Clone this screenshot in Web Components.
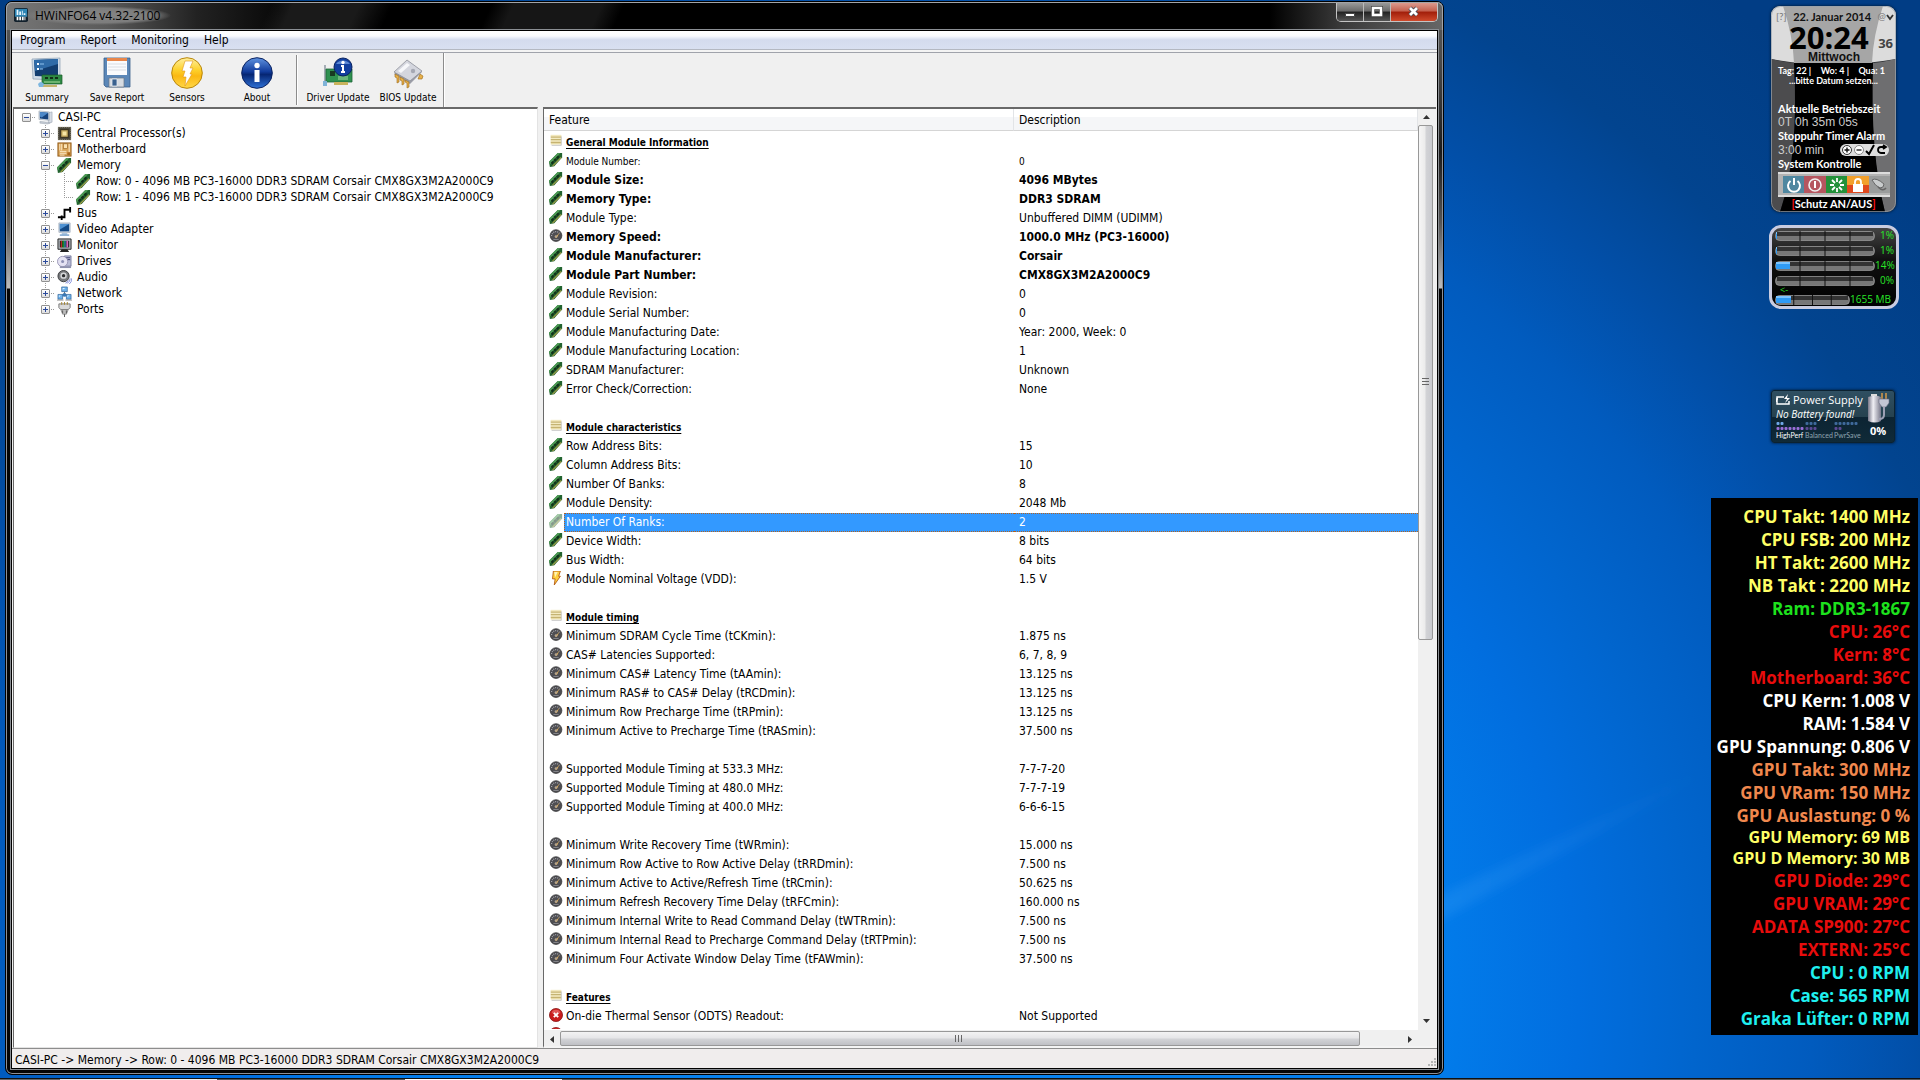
<!DOCTYPE html>
<html lang="de">
<head>
<meta charset="utf-8">
<title>HWiNFO64 v4.32-2100</title>
<style>
html,body{margin:0;height:100%}
body{font:12px/16px "DejaVu Sans Condensed","DejaVu Sans",sans-serif;color:#000;overflow:hidden}
</style>
</head>
<body>
<desk-top>
  <hw-window caption="HWiNFO64 v4.32-2100">
    <hw-menu slot="menu"></hw-menu>
    <hw-toolbar slot="tools"></hw-toolbar>
    <hw-tree slot="tree"></hw-tree>
    <hw-list slot="list"></hw-list>
    <span slot="status">CASI-PC -&gt; Memory -&gt; Row: 0 - 4096 MB PC3-16000 DDR3 SDRAM Corsair CMX8GX3M2A2000C9</span>
  </hw-window>
  <clock-gadget slot="gadgets"></clock-gadget>
  <meter-gadget slot="gadgets"></meter-gadget>
  <power-gadget slot="gadgets"></power-gadget>
  <sensor-gadget slot="gadgets"></sensor-gadget>
</desk-top>
<script>
const define = (name, render) => customElements.define(name, class extends HTMLElement {
  connectedCallback() {
    if (this.shadowRoot) return;
    this.attachShadow({ mode: 'open' }).innerHTML = render(this);
  }
});
const RESET = ':host{box-sizing:border-box}button{font:inherit;color:inherit;background:none;border:0;padding:0;margin:0;display:block;text-align:center}*{box-sizing:border-box}svg{display:block}';

const ICONS = {
  app: `<rect width="16" height="16" rx="2" fill="#12202c"/><rect x="1" y="1" width="14" height="9" fill="#2f86b5"/><path d="M3 2h2v6H3zM6 4h2v4H6zM9 3h1v5H9zM11 6h2v2h-2z" fill="#e8f6ff"/><path d="M3 10h2v4H3zM6 10h2v4H6zM9 10h2v4H9zM12 10h1v4h-1z" fill="#fff"/>`,
  pc: `<path d="M11 3l4-1v11l-4 1z" fill="#d5dbe4" stroke="#8c96a3" stroke-width=".5"/><path d="M1 1l11 1v9L1 10z" fill="#e3e9f0" stroke="#7f8b99" stroke-width=".5"/><path d="M2 2l9 1v7L2 9z" fill="#15427c"/><path d="M2 2l9 1-7 5-2-1z" fill="#4c88c8"/><path d="M2 12l8 1 3 1-3 1-8-1z" fill="#c3cad3" stroke="#8c96a3" stroke-width=".4"/>`,
  cpu: `<rect x="1" y="1" width="14" height="14" fill="#4a473c"/><rect x="1.500" y="1.500" width="13" height="13" fill="none" stroke="#8a8672" stroke-dasharray="1 1"/><rect x="4" y="4" width="8" height="8" fill="#c9ad62" stroke="#2b2515"/><rect x="6" y="6" width="4" height="4" fill="#f7e6a5"/>`,
  board: `<rect x="1" y="1" width="14" height="14" fill="#d9a55a" stroke="#8f5714"/><rect x="7" y="2" width="4" height="5" fill="#fbe2b0" stroke="#8f5714" stroke-width=".6"/><path d="M3 2v7M5 2v7M13 2v9M3 10h7M3 12h7M3 14h5" stroke="#fff3d8" stroke-width=".9"/><rect x="11" y="11" width="3" height="3" fill="#a8641a"/>`,
  ram: `<path d="M0 10L10 0h5v5L6 15l-5 1z" fill="#22632f"/><path d="M0 10L10 0h3L1 13z" fill="#4d9a55"/><path d="M2 11l2-2 2 1-2 3zM5 8l2-2 2 1-2 3zM8 5l2-2 2 1-2 3z" fill="#12301a"/><path d="M4 15L14 5" stroke="#a8a04a" stroke-width="1.200"/>`,
  bus: `<path d="M1 12h7V4h6M5 10v5M14 1v6" fill="none" stroke="#000" stroke-width="2"/>`,
  video: `<path d="M2 1h12v10H2z" fill="#dfe6ee" stroke="#8090a2" stroke-width=".6"/><path d="M3 2h10v8H3z" fill="#134a86"/><path d="M3 2h10L3 8z" fill="#4f92d2"/><path d="M5 12h6v1h2v2H3v-2h2z" fill="#8fb3d6"/>`,
  monitor: `<path d="M1 1h14v11H1z" fill="#aeb4ba" stroke="#222"/><path d="M3 3h10v7H3z" fill="#111"/><path d="M4 3h1v7H4z" fill="#f33"/><path d="M6 3h1v7H6z" fill="#3d3"/><path d="M8 3h1v7H8z" fill="#3cf"/><path d="M10 3h2v7h-2z" fill="#d6b"/><path d="M5 12h6l2 3H3z" fill="#222"/>`,
  drive: `<path d="M8 2h7v11H8z" fill="#b9bcd6" stroke="#5c5f88" stroke-width=".7"/><path d="M9 4h5M9 6h5" stroke="#34386b"/><circle cx="6" cy="8" r="5.500" fill="#e4e2f2" stroke="#8784a8" stroke-width=".8"/><circle cx="6" cy="8" r="1.600" fill="#8c8fb4"/><path d="M3 13h12v2H3z" fill="#8f92ae"/>`,
  audio: `<circle cx="7" cy="6.500" r="6" fill="#77797c" stroke="#3a3b3d"/><circle cx="7" cy="6" r="3.400" fill="#d5d6d8"/><circle cx="7" cy="6" r="1.800" fill="#2d2e30"/><path d="M11 14q3-1 3-5M13 15q3-2 2.500-6M9 14q2 0 3-3" fill="none" stroke="#7a86d8" stroke-width=".9"/>`,
  net: `<path d="M8 6v4M4 11l4-3 4 3" stroke="#6a6a6a" fill="none"/><path d="M5 1h6v5H5zM1 9h5v5H1zM10 9h5v5h-5z" fill="#6eb2ea" stroke="#2a5e96" stroke-width=".7"/><path d="M6 2h3L6 4zM2 10h2l-2 2zM11 10h2l-2 2z" fill="#e2f2ff"/><circle cx="8" cy="9.500" r="2" fill="#3978b5"/><path d="M0 15h7M9 15h7" stroke="#909090"/>`,
  port: `<path d="M2 2h12v4l-2 2H4L2 6z" fill="#d9d9d9" stroke="#777"/><path d="M5 0v3M8 0v3M11 0v3" stroke="#a48531"/><path d="M4 8h8l-2 5H6z" fill="#bdbdbd" stroke="#777" stroke-width=".7"/><path d="M8 13v3M6 9v3M10 9v3" stroke="#555"/>`,
  list: `<rect x="2" y="1" width="12" height="11" fill="#e8dca6"/><path d="M2 3.500h12M2 6.500h12M2 9.500h12" stroke="#b8a45e"/><path d="M2 2h12M2 5h12M2 8h12" stroke="#f8f1cf" stroke-width=".9"/><path d="M3 13h11V3" fill="none" stroke="#c4c4c4"/>`,
  gauge: `<circle cx="8" cy="7.500" r="6.700" fill="#4e4e52" stroke="#2c2c2e" stroke-width=".8"/><path d="M3 8a5 5 0 0 1 9-3" fill="none" stroke="#b8b8c0" stroke-dasharray="1 1.300" stroke-width="1.300"/><path d="M7 10l5-6-3 6z" fill="#f0b95a"/><circle cx="8" cy="8.500" r="1.500" fill="#b6a58c"/><path d="M5 12h6" stroke="#8d8d92"/>`,
  bolt: `<path d="M5 0h8l-2 6h2L6 16l1-7H4z" fill="#ffcf3e" stroke="#b35a12"/><path d="M6 1h4L7 7z" fill="#fff4b8"/>`,
  err: `<circle cx="8" cy="8" r="7.500" fill="#c81d1d" stroke="#7c0c0c" stroke-width=".8"/><path d="M3 6a5 4 0 0 1 10 0z" fill="#ef7d7d" opacity=".6"/><path d="M5.500 5.500l5 5M10.500 5.500l-5 5" stroke="#fff" stroke-width="2.200"/>`,
  summary: `<path d="M1 2l28-1v22L2 22z" fill="#cfdbe8" stroke="#8a9db2" stroke-width=".7"/><path d="M3 3l24-1v18L4 19z" fill="#123d70"/><path d="M3 3l24-1v5L4 14z" fill="#2f6ba8"/><path d="M6 6h2v2H6zM6 11h2v2H6z" fill="#fff"/><path d="M9 7h4M9 12h3" stroke="#8fc3ef"/><path d="M11 18h20v9H11z" fill="#2f8a45" stroke="#1a5c2a" stroke-width=".7"/><path d="M14 20h3v2h-3zM19 20h3v2h-3zM24 20h3v2h-3z" fill="#12301a"/><path d="M13 25h16" stroke="#a9dd9a"/><path d="M12 28h14v2H12z" fill="#c5b36c"/><path d="M7 27q3-4 6 0l-1 3H8z" fill="#7db6df"/>`,
  save: `<path d="M3 1h26v29H5l-2-2z" fill="#5b87b8" stroke="#3b5f8a" stroke-width=".8"/><path d="M6 1h20v17H6z" fill="#fafbfd"/><path d="M6 1h20v3H6z" fill="#e8864a"/><path d="M7 7h18M7 10h18M7 13h18" stroke="#d9dde3"/><path d="M8 21h15v9H8z" fill="#d6dbe1" stroke="#6a7685" stroke-width=".7"/><path d="M11 22h5v7h-5z" fill="#39618f" stroke="#e9eef4" stroke-width=".8"/>`,
  sensors: `<defs><linearGradient id="g" x2="0" y2="1"><stop offset="0" stop-color="#fff0a0"/><stop offset=".4" stop-color="#fdd12c"/><stop offset=".6" stop-color="#fbb812"/><stop offset="1" stop-color="#ffd84a"/></linearGradient></defs><circle cx="16" cy="16" r="15.300" fill="url(#g)" stroke="#b8860b"/><path d="M14 4h8l-3 7h3l-3 6h2l-7 12 1-9h-3l2-6h-3z" fill="#fff" stroke="#e0951b" stroke-width=".6"/>`,
  about: `<defs><linearGradient id="g" x2="0" y2="1"><stop offset="0" stop-color="#5f93e0"/><stop offset=".45" stop-color="#123c9c"/><stop offset=".55" stop-color="#062673"/><stop offset="1" stop-color="#2f72d8"/></linearGradient></defs><circle cx="16" cy="16" r="15.300" fill="url(#g)" stroke="#0b2260"/><circle cx="16" cy="8.500" r="2.700" fill="#fff"/><path d="M13.500 13h5v12h-5z" fill="#fff"/>`,
  driver: `<path d="M3 8v21" stroke="#a5adb5" stroke-width="2"/><path d="M4 12h26v13H4z" fill="#2f9150" stroke="#1d6435" stroke-width=".8"/><path d="M8 14h5v5H8z" fill="#183a22"/><path d="M16 20h10M16 22h10" stroke="#a6dba4"/><path d="M12 25h14v3H12z" fill="#c8b35c"/><path d="M1 24h4v5H1z" fill="#7fb3d8"/><circle cx="21" cy="10" r="9" fill="#123f9f" stroke="#0a2360"/><path d="M14 7a8 7 0 0 1 14 0z" fill="#7ba6ea" opacity=".7"/><circle cx="21" cy="5.500" r="1.700" fill="#fff"/><path d="M19 8h3v6h1v2h-4v-2h1v-4h-1z" fill="#fff"/>`,
  bios: `<path d="M2 17l14-13 14 11-12 12z" fill="#9c9ea8"/><path d="M2 15L15 3l15 11-12 10z" fill="#d4d6de" stroke="#83858f" stroke-width=".7"/><path d="M6 14l9-8 3 2-9 8z" fill="#f6f7fa"/><circle cx="21" cy="14" r="2.200" fill="#a5a8b3"/><path d="M3 17l4 2v6l-2 1v-5l-2-1zM8 20l4 2v5l-2 1v-4l-2-1zM13 23l4 2v5l-2 1v-5l-2-1zM28 17l3 2-1 3-4 0z" fill="#e7b04a" stroke="#9a6a17" stroke-width=".6"/>`
};
customElements.define('hw-icon', class extends HTMLElement {
  connectedCallback() {
    if (this.shadowRoot) return;
    const n = this.getAttribute('name'), big = ['summary','save','sensors','about','driver','bios'].includes(n) ? 32 : 16;
    this.attachShadow({ mode: 'open' }).innerHTML =
      `<style>:host{display:inline-block;width:14px;height:14px;flex:none}svg{display:block;width:100%;height:100%}</style><svg viewBox="0 0 ${big} ${big}" aria-hidden="true">${ICONS[n]}</svg>`;
  }
});

define('desk-top', () => `<style>${RESET}
:host{display:grid;height:100vh;grid-template:minmax(0,1fr) 2px / minmax(0,1fr) 209px;position:relative;overflow:hidden;
 background:radial-gradient(circle 1300px at 47% 93%,#0a86f2 0,#027bea 42%,#016edf 52%,#0165cd 61%,#015bbe 70%,#024fa8 78%,#02448f 87%,#013d85 100%)}
.beam{position:absolute;inset:0;width:100%;height:100%}
.main{display:flex;min-height:0;padding:1px 267px 3px 5px;position:relative}
.side{display:flex;flex-direction:column;align-items:flex-end;position:relative}
.task{grid-column:1/3;position:relative;border-top:1px solid #111;background:linear-gradient(90deg,#666 60px,#eee 60px 217px,#555 217px 405px,#fff 405px 562px,#555 562px)}
</style>
<svg class="beam" viewBox="0 0 1920 1080" preserveAspectRatio="none" aria-hidden="true"><defs><linearGradient id="b"><stop offset="0" stop-color="#5ab4ff" stop-opacity=".18"/><stop offset="1" stop-color="#5ab4ff" stop-opacity="0"/></linearGradient><filter id="s"><feGaussianBlur stdDeviation="5"/></filter></defs>
<path d="M1430 900L1700 770v8L1430 926z" fill="url(#b)" filter="url(#s)"/></svg>
<div class="main"><slot></slot></div><div class="side"><slot name="gadgets"></slot></div><div class="task"></div>`);

define('hw-window', el => `<style>${RESET}
:host{display:flex;flex-direction:column;flex:1;min-width:0;border:1px solid #000;border-radius:7px;padding:0 5px 5px;box-shadow:inset 0 0 0 1px #8d9096;
 background:linear-gradient(#5c5c5c 0,#4a4a4a 60px,#1c1c1c 150px,#555 220px,#bcbcbc 286px,#050505 287px)}
header{display:flex;align-items:flex-start;height:28px;margin:0 -5px;padding:0 4px 0 7px;border-radius:6px 6px 0 0;border:1px solid #a2a4a8;border-bottom:0;
 background:linear-gradient(115deg,transparent 240px,#1a1a1a 260px 320px,transparent 350px 440px,#161616 460px 540px,transparent 560px),linear-gradient(90deg,#777 0,#5a5a5a 100px,#222 190px,#000 300px,#000 88%,#3a3a3a 93%,#666 100%)}
header hw-icon{margin-top:5px}
h1{margin:3px 0 0 -4px;font:12px/19px "Open Sans",sans-serif;padding:0 11px;color:#000;background:radial-gradient(closest-side,#858585,#7d7d7d 75%,transparent)}
.ctl{display:flex;margin-left:auto;border:1px solid #c4c4c4;border-top:0;border-radius:0 0 5px 5px;overflow:hidden}
.ctl button{width:27px;height:18px;display:grid;place-items:center;background:linear-gradient(#999 0,#6a6a6a 45%,#222 50%,#555 100%);border-right:1px solid #bbb}
.ctl .x{width:46px;border:0;background:linear-gradient(#dc9a8d 0,#c4604e 45%,#a11e0a 50%,#cf4a2c 100%)}
.client{flex:1;min-height:0;display:flex;flex-direction:column;background:#f0f0f0;border:1px solid #000;outline:1px solid #8b8f94}
.body{flex:1;min-height:0;display:flex;gap:5px;padding:0 1px}
footer{height:20px;border-top:1px solid #8d8d8d;background:#f0eded;padding:2px 0 0 3px;display:flex;justify-content:space-between;align-items:center}
footer svg{align-self:flex-end}
::slotted([slot=tree]){flex:0 0 525px}
::slotted([slot=list]){flex:1;min-width:0}
</style>
<header><hw-icon name="app"></hw-icon><h1>${el.getAttribute('caption')}</h1>
<div class="ctl"><button aria-label="Minimize"><svg width="14" height="12"><path d="M2.500 7.500h9v3h-9z" fill="#fff" stroke="#444"/></svg></button>
<button aria-label="Maximize"><svg width="14" height="12"><path d="M3 2h8v7H3z" fill="none" stroke="#444" stroke-width="4"/><path d="M3 2h8v7H3z" fill="none" stroke="#fff" stroke-width="2.500"/></svg></button>
<button class="x" aria-label="Close"><svg width="14" height="12"><path d="M3 2l7 7M10 2l-7 7" stroke="#444a55" stroke-width="4.500"/><path d="M3 2l7 7M10 2l-7 7" stroke="#fff" stroke-width="2.800"/></svg></button></div></header>
<div class="client"><slot name="menu"></slot><slot name="tools"></slot><div class="body"><slot name="tree"></slot><slot name="list"></slot></div>
<footer><slot name="status"></slot><svg width="12" height="12"><path d="M9 3h2M9 6h2M9 9h2M6 6h2M6 9h2M3 9h2" stroke="#b5b5b5" stroke-width="2" stroke-dasharray="2"/></svg></footer></div>`);

define('hw-menu', () => `<style>${RESET}
:host{display:flex;gap:15px;height:22px;padding-left:8px;background:linear-gradient(#fff 0,#fafbfe 5px,#e6ebf7 7px,#d4dbee 9px,#d9e0f1 18px,#f0f0f0 18px);border-bottom:1px solid #a0a3ab;box-shadow:inset 0 -2px #f4f4f4,inset 0 -3px #b4b8c2}
button{height:19px;line-height:19px}</style>
${['Program','Report','Monitoring','Help'].map(t => `<button>${t}</button>`).join('')}`);

define('hw-toolbar', () => `<style>${RESET}
:host{display:flex;height:54px;font-size:10px;line-height:12px}
button{width:70px;height:53px;padding-top:4px;display:flex;flex-direction:column;align-items:center;gap:3px;white-space:nowrap}
hw-icon{width:32px;height:32px}
i{width:1px;height:50px;margin:2px 6px 0 4px;background:#8c8c8c;box-shadow:1px 0 #fff}
i.e{height:54px;margin:0}</style>
${[['summary','Summary'],['save','Save Report'],['sensors','Sensors'],['about','About'],0,['driver','Driver Update'],['bios','BIOS Update']].map(b => b ? `<button><hw-icon name="${b[0]}"></hw-icon><span>${b[1]}</span></button>` : '<i></i>').join('')}<i class="e"></i>`);

const TREE = [[0,'-','pc','CASI-PC'],[1,'+','cpu','Central Processor(s)'],[1,'+','board','Motherboard'],[1,'-','ram','Memory'],
 [2,'','ram','Row: 0 - 4096 MB PC3-16000 DDR3 SDRAM Corsair CMX8GX3M2A2000C9'],[2,'end','ram','Row: 1 - 4096 MB PC3-16000 DDR3 SDRAM Corsair CMX8GX3M2A2000C9'],
 [1,'+','bus','Bus'],[1,'+','video','Video Adapter'],[1,'+','monitor','Monitor'],[1,'+','drive','Drives'],[1,'+','audio','Audio'],[1,'+','net','Network'],[1,'+ end','port','Ports']];
define('hw-tree', () => `<style>${RESET}
:host{display:block;background:#fff;border:1px solid #e3e3e3;border-top:2px solid #696969;border-left:1px solid #696969;padding-left:3px}
ul{list-style:none;margin:0;padding:0}
li{display:flex;height:16px;align-items:center;line-height:16px;white-space:nowrap}
li>span{width:19px;height:16px;flex:none;display:grid;place-items:center;--v:repeating-linear-gradient(#999 0 1px,transparent 1px 2px);--h:repeating-linear-gradient(90deg,#999 0 1px,transparent 1px 2px)}
.v{background:var(--v) 9px 0/1px 16px no-repeat}
.t{background:var(--v) 9px 0/1px 16px no-repeat,var(--h) 9px 8px/10px 1px no-repeat}
.l{background:var(--v) 9px 0/1px 8px no-repeat,var(--h) 9px 8px/10px 1px no-repeat}
.r{background:var(--h) 9px 8px/10px 1px no-repeat}
hw-icon{width:15px;height:15px}
b{font-weight:400;padding-left:3px}
button{width:9px;height:9px;border:1px solid #919191;border-radius:1px;background:linear-gradient(#fff,#ddd)}
</style><ul>${TREE.map(([d,e,ic,t]) => {
  let c = '';
  if (d >= 1) c += '<span></span>';
  if (d === 2) c += '<span class="v"></span>';
  const pm = e[0] === '+' || e[0] === '-';
  c += `<span class="${d === 0 ? 'r' : e.includes('end') ? 'l' : 't'}">${pm ? `<button aria-label="${e[0] === '+' ? 'Expand' : 'Collapse'}"><svg width="7" height="7"><path d="M1 3.500h5${e[0] === '+' ? 'M3.500 1v5' : ''}" stroke="#2b4a9b"/></svg></button>` : ''}</span>`;
  return `<li>${c}<span><hw-icon name="${ic}"></hw-icon></span><b>${t}</b></li>`;
}).join('')}</ul>`);

const r = 'ram', g = 'gauge';
const ROWS = [['list','General Module Information','','h'],[r,'Module Number:','0','s'],[r,'Module Size:','4096 MBytes','b'],[r,'Memory Type:','DDR3 SDRAM','b'],
[r,'Module Type:','Unbuffered DIMM (UDIMM)'],[g,'Memory Speed:','1000.0 MHz (PC3-16000)','b'],[r,'Module Manufacturer:','Corsair','b'],[r,'Module Part Number:','CMX8GX3M2A2000C9','b'],
[r,'Module Revision:','0'],[r,'Module Serial Number:','0'],[r,'Module Manufacturing Date:','Year: 2000, Week: 0'],[r,'Module Manufacturing Location:','1'],[r,'SDRAM Manufacturer:','Unknown'],[r,'Error Check/Correction:','None'],0,
['list','Module characteristics','','h'],[r,'Row Address Bits:','15'],[r,'Column Address Bits:','10'],[r,'Number Of Banks:','8'],[r,'Module Density:','2048 Mb'],[r,'Number Of Ranks:','2','sel'],[r,'Device Width:','8 bits'],[r,'Bus Width:','64 bits'],['bolt','Module Nominal Voltage (VDD):','1.5 V'],0,
['list','Module timing','','h'],[g,'Minimum SDRAM Cycle Time (tCKmin):','1.875 ns'],[g,'CAS# Latencies Supported:','6, 7, 8, 9'],[g,'Minimum CAS# Latency Time (tAAmin):','13.125 ns'],[g,'Minimum RAS# to CAS# Delay (tRCDmin):','13.125 ns'],[g,'Minimum Row Precharge Time (tRPmin):','13.125 ns'],[g,'Minimum Active to Precharge Time (tRASmin):','37.500 ns'],0,
[g,'Supported Module Timing at 533.3 MHz:','7-7-7-20'],[g,'Supported Module Timing at 480.0 MHz:','7-7-7-19'],[g,'Supported Module Timing at 400.0 MHz:','6-6-6-15'],0,
[g,'Minimum Write Recovery Time (tWRmin):','15.000 ns'],[g,'Minimum Row Active to Row Active Delay (tRRDmin):','7.500 ns'],[g,'Minimum Active to Active/Refresh Time (tRCmin):','50.625 ns'],[g,'Minimum Refresh Recovery Time Delay (tRFCmin):','160.000 ns'],[g,'Minimum Internal Write to Read Command Delay (tWTRmin):','7.500 ns'],[g,'Minimum Internal Read to Precharge Command Delay (tRTPmin):','7.500 ns'],[g,'Minimum Four Activate Window Delay Time (tFAWmin):','37.500 ns'],0,
['list','Features','','h'],['err','On-die Thermal Sensor (ODTS) Readout:','Not Supported'],['err','Auto Self Refresh (ASR):','Not Supported']];
define('hw-list', () => `<style>${RESET}
:host{display:grid;grid-template:minmax(0,1fr) 17px / minmax(0,1fr) 18px;background:#fff;border-top:2px solid #696969;border-left:1px solid #696969;border-bottom:2px solid #f4f4f4}
.view{overflow:hidden;min-height:0}
table{width:100%;border-collapse:separate;border-spacing:0;table-layout:fixed}
col.f{width:470px}
th{height:22px;padding:0 0 0 5px;text-align:left;font-weight:400;border-bottom:1px solid #d5d5d5;border-right:1px solid #e2e4e7;background:linear-gradient(#fff 8px,#f5f6f8 8px)}
td{height:19px;padding:0;line-height:19px;white-space:nowrap}
td+td,th+th{padding-left:5px}
.c{display:flex;align-items:flex-start;height:19px;padding-left:5px}
.c hw-icon{margin-top:1px}
.c span{padding-left:2px;margin-left:1px;flex:1}
.b td{font-weight:700}
.h td{font-size:10px;font-weight:700}.h u{text-underline-offset:2px}
.s td{font-size:10px}
.sel td{color:#fff}
.sel .c span,.sel td+td{background:#39f;border-top:1px dotted #b5611c;border-bottom:1px dotted #b5611c;line-height:17px}
.sel .c span{border-left:1px dotted #b5611c;padding-left:1px}
.sel hw-icon{opacity:.5}
.gap td{height:2px}
.vs,.hs{display:flex;background:#f0f0f0}
.vs{flex-direction:column;padding-right:2px}
.hs{padding:1px 0;border-top:1px solid #fff}
.corner{background:#f0f0f0}
.bar button{width:16px;height:16px;display:grid;place-items:center;flex:none}
.track{flex:1;display:flex;min-height:0;min-width:0}
.vs .track{flex-direction:column}
.th{display:grid;place-items:center;border:1px solid #989898;border-radius:2px}
.vs .th{height:58%;width:15px;background:linear-gradient(90deg,#f6f6f6,#ececec 45%,#d2d3d6 55%,#c9cacf)}
.hs .th{width:95%;height:15px;background:linear-gradient(#f3f3f3,#e6e6e8 45%,#d2d3d6 55%,#bfc0c5)}
</style>
<div class="view"><table><colgroup><col class="f"><col></colgroup><thead><tr><th>Feature</th><th>Description</th></tr></thead><tbody>
<tr class="gap"><td></td><td></td></tr>
${ROWS.map(x => x ? `<tr class="${x[3] || ''}"><td><div class="c"><hw-icon name="${x[0]}"></hw-icon><span>${x[3] === 'h' ? `<u>${x[1]}</u>` : x[1]}</span></div></td><td>${x[2]}</td></tr>` : '<tr><td></td><td></td></tr>').join('')}
</tbody></table></div>
<div class="bar vs"><button aria-label="Up"><svg width="7" height="4"><path d="M0 4l3.500-4L7 4z" fill="#333"/></svg></button><div class="track"><div class="th"><svg width="7" height="9"><path d="M0 .5h7M0 3.500h7M0 6.500h7" stroke="#666"/></svg></div></div><button aria-label="Down"><svg width="7" height="4"><path d="M0 0l3.500 4L7 0z" fill="#333"/></svg></button></div>
<div class="bar hs"><button aria-label="Left"><svg width="4" height="7"><path d="M4 0L0 3.500 4 7z" fill="#333"/></svg></button><div class="track"><div class="th"><svg width="9" height="7"><path d="M.5 0v7M3.500 0v7M6.500 0v7" stroke="#666"/></svg></div></div><button aria-label="Right"><svg width="4" height="7"><path d="M0 0l4 3.500L0 7z" fill="#333"/></svg></button></div><div class="corner"></div>`);

define('clock-gadget', () => `<style>${RESET}
:host{display:flex;flex-direction:column;position:relative;width:125px;height:206px;margin:6px 24px 0 0;padding:4px 7px 0;border-radius:9px;overflow:hidden;color:#fff;font:700 11px/13px Lato,sans-serif;white-space:nowrap;box-shadow:0 0 3px #012}
:host>*{position:relative}
svg.bg{position:absolute;inset:0}
p{margin:0}
.date{display:flex;justify-content:space-between;height:13px;color:#111;margin:0 -5px 0 -2px;line-height:13px}
.date i{font-style:normal;font-weight:400;font-size:10px;color:#777;display:flex;align-items:center}
.time{display:flex;align-items:flex-end;height:28px;margin:0 -4px 0 11px;justify-content:space-between;color:#000;font:700 31px/28px "Open Sans",sans-serif}
.time small{font:700 13px/15px "Open Sans",sans-serif;color:#444}
.day{font:700 12px/12px "Liberation Sans",sans-serif;color:#111;text-align:center;padding-left:1px}
.sm{font:700 9px/10px Lato,sans-serif;text-align:center}
.sm.a{margin-top:3px;display:flex;justify-content:space-between;padding:0 4px 0 0}
.big{margin-top:16px}
.ar{font:12px/14px "Liberation Sans",sans-serif;color:#ccc}
.l{line-height:14px}
.row{display:flex;justify-content:space-between;align-items:center;height:14px}
.pill{display:flex;background:#ddd;border-radius:6px;padding:0 1px;height:12px}
.strip{display:flex;margin:1px -1px 0 0;height:25px;padding:2px 0 2px 5px;background:#b3b3b3;border-top:2px solid #ddd;border-bottom:2px solid #ddd}
.strip button{flex:1;display:grid;place-items:center}
.prot{text-align:center;line-height:14px}.prot em{color:#f11;font-style:normal}
</style>
<svg class="bg" width="125" height="206" viewBox="0 0 125 206" aria-hidden="true">
<rect width="125" height="206" fill="#2c2e32"/><path d="M0 0h125v53Q62 64 0 53z" fill="#dcdcdc"/><path d="M12 0h100q-10 30-11 57H23Q22 30 12 0z" fill="#a6a6a6"/><path d="M0 53q12 3 23 4 6 90-14 149H0z" fill="#4c4c4e"/><path d="M125 53q-12 3-23 4-4 90 12 149h11z" fill="#6e6e70"/><path d="M23 57h79q-3 90 12 149H9Q28 150 23 57z" fill="#000"/><rect x=".5" y=".5" width="124" height="205" rx="9" fill="none" stroke="#9aa3ad" opacity=".7"/></svg>
<div class="date"><i>[?]</i><span>22. Januar 2014</span><i>@<svg width="8" height="8"><path d="M1 2l3 4 3-4" fill="none" stroke="#333" stroke-width="1.800"/></svg></i></div>
<div class="time"><span>20:24</span><small>36</small></div>
<p class="day">Mittwoch</p>
<p class="sm a"><span>Tag: 22 |</span><span>Wo: 4 |</span><span>Qua: 1</span></p><p class="sm">...bitte Datum setzen...</p>
<p class="big">Aktuelle Betriebszeit</p><p class="ar">0T 0h 35m 05s</p><p class="l">Stoppuhr Timer Alarm</p>
<div class="row ar"><span>3:00 min</span><div class="pill"><button aria-label="Mehr"><svg width="12" height="12"><circle cx="6" cy="6" r="4.500" fill="#fff" stroke="#333"/><path d="M3.500 6h5M6 3.500v5" stroke="#111" stroke-width="1.400"/></svg></button><button aria-label="Weniger"><svg width="12" height="12"><circle cx="6" cy="6" r="4.500" fill="#fff" stroke="#888"/><path d="M3.500 6h5" stroke="#333" stroke-width="1.400"/></svg></button><button aria-label="Start"><svg width="11" height="12"><path d="M1 7l3 3 5-9" fill="none" stroke="#000" stroke-width="2"/></svg></button><button aria-label="Reset"><svg width="12" height="12"><path d="M9 9H5a3 3 0 0 1 0-6h4M7 1l3 2-3 2" fill="none" stroke="#000" stroke-width="1.800"/></svg></button></div></div>
<p class="l">System Kontrolle</p>
<div class="strip">
<button aria-label="Standby" style="background:#4f87a0"><svg width="18" height="18"><path d="M5.500 5a6 6 0 1 0 7 0M9 2v7" fill="none" stroke="#fff" stroke-width="2"/></svg></button>
<button aria-label="Ausschalten" style="background:#b5555f"><svg width="18" height="18"><circle cx="9" cy="9" r="6" fill="none" stroke="#eee" stroke-width="1.600"/><path d="M9 5v7" stroke="#fff" stroke-width="2"/></svg></button>
<button aria-label="Neustart" style="background:#23913a"><svg width="18" height="18"><path d="M9 2v4M9 12v4M2 9h4M12 9h4M4 4l3 3M11 11l3 3M14 4l-3 3M7 11l-3 3" stroke="#fff" stroke-width="1.800"/></svg></button>
<button aria-label="Sperren" style="background:linear-gradient(#f2a02c 50%,#e0481c 50%)"><svg width="18" height="18"><path d="M6 9V6a3 3 0 0 1 6 0v3" fill="none" stroke="#fff" stroke-width="1.800"/><path d="M4 8h10v8H4z" fill="#fff"/></svg></button>
<button aria-label="Abmelden" style="background:#9a9c9c"><svg width="18" height="18"><path d="M2 4q4-3 12 4 0 4-4 4Q5 10 2 4z" fill="#c9cccd" stroke="#666"/><path d="M8 11q5 5 8 1" fill="none" stroke="#666" stroke-width="1.500"/></svg></button></div>
<p class="prot"><em>[</em>Schutz AN/AUS<em>]</em></p>`);

define('meter-gadget', () => `<style>${RESET}
:host{display:flex;flex-direction:column;width:130px;height:84px;margin:13px 21px 0 0;padding:0 2px 0 3px;border:3px solid #c9cce0;border-radius:12px;background:linear-gradient(#444,#111 40%,#000);color:#28e628;font:10px/15px "Open Sans",sans-serif}
div{display:flex;align-items:center;justify-content:space-between;height:15px;white-space:nowrap}
svg{flex:none}
.n{height:4px;line-height:4px;padding-left:5px;font-size:9px}
.last{padding-right:5px}
</style>${[['1%',1],['1%',1],['14%',14],['0%',0],'<-',['1655 MB',15,1]].map(m => m === '<-' ? '<div class="n">&lt;-</div>' : (() => {
  const w = m[2] ? 75 : 100;
  return `<div${m[2] ? ' class="last"' : ''}><svg width="${w}" height="10" aria-hidden="true"><rect x=".5" y=".5" width="${w - 1}" height="9" rx="4" fill="#777" stroke="#aaa" stroke-opacity=".6"/><rect x="2" y="1" width="${w - 4}" height="4" fill="#333"/><path d="M${w/4} 0v10M${w/2} 0v10M${w*3/4} 0v10" stroke="#111"/>${m[1] ? `<rect x="1" y="1" width="${m[1]}" height="7" fill="#2f9bf5"/><rect x="1" y="1" width="${m[1]}" height="2" fill="#7cc4ff"/>` : ''}</svg><span>${m[0]}</span></div>`; })()).join('')}`);

const dots = (n, c) => `<svg width="28" height="4" aria-hidden="true">${Array.from({length:n},(_,i)=>`<rect x="${i*4+.5}" y="0" width="3" height="3" rx="1" fill="${c}"/>`).join('')}</svg>`;
define('power-gadget', () => `<style>${RESET}
:host{display:flex;width:124px;height:53px;margin:81px 25px 0 0;padding:2px 4px 1px;border:1px solid #0c2230;border-radius:3px;color:#fff;background:linear-gradient(#2f4f62,#26424f 50%,#0c2433 52%,#102a38);font:12px/14px "Open Sans",sans-serif;white-space:nowrap;box-shadow:0 0 3px #012}
.l{flex:1;min-width:0}.t{display:flex;align-items:center;gap:3px;font-size:11px}
.i{font-style:italic;font-size:10px;line-height:14px}
.m{display:flex;font:7px/8px Lato,sans-serif;color:#8fa4b0}
.m>*{width:29px;text-align:left}.m>:first-child{color:#fff}.m svg{margin-top:1px}
.r{width:24px;display:flex;flex-direction:column;align-items:center;font-weight:700;font-size:11px}
</style><div class="l"><div class="t"><svg width="14" height="12"><path d="M8 3H1v7h12V7M2 5H0v3" fill="none" stroke="#fff" stroke-width="1.500"/><path d="M12 0L8 5h3L9 9l5-5h-3z" fill="#fff"/></svg>Power Supply</div><div class="i">No Battery found!</div>
<div class="m"><button>${dots(2,'#6fa8e8')}${dots(7,'#9a6fd8')}HighPerf</button><button>${dots(3,'#3f6a9c')}${dots(3,'#5c4a94')}Balanced</button><button>${dots(6,'#3f6a9c')}${dots(2,'#5c4a94')}PwrSave</button></div></div>
<div class="r"><svg width="24" height="31"><defs><linearGradient id="c"><stop offset="0" stop-color="#777788"/><stop offset=".4" stop-color="#f0f0f5"/><stop offset="1" stop-color="#77788a"/></linearGradient></defs><path d="M2 4q8-3 13 0v24q-6 3-13 0z" fill="url(#c)"/><path d="M5 1h6v2H5z" fill="#ddd"/><path d="M16 0v6M20 0v6" stroke="#d89a4a" stroke-width="1.500"/><path d="M13 6h10v4l-3 4h-4l-3-4z" fill="#c3c6d4" stroke="#666a80" stroke-width=".6"/><path d="M18 14v8q0 4-5 4" fill="none" stroke="#9da0b4" stroke-width="2"/></svg><span>0%</span></div>`);

define('sensor-gadget', () => {
  const L = [['y','CPU Takt: 1400 MHz'],['y','CPU FSB: 200 MHz'],['y','HT Takt: 2600 MHz'],['y','NB Takt : 2200 MHz'],['g','Ram: DDR3-1867'],['r','CPU: 26°C'],['r','Kern: 8°C'],['r','Motherboard: 36°C'],['w','CPU Kern: 1.008 V'],['w','RAM: 1.584 V'],['w','GPU Spannung: 0.806 V'],['o','GPU Takt: 300 MHz'],['o','GPU VRam: 150 MHz'],['o','GPU Auslastung: 0 %'],['y s','GPU Memory: 69 MB'],['y s','GPU D Memory: 30 MB'],['r','GPU Diode: 29°C'],['r','GPU VRAM: 29°C'],['r','ADATA SP900: 27°C'],['r','EXTERN: 25°C'],['c','CPU : 0 RPM'],['c','Case: 565 RPM'],['c','Graka Lüfter: 0 RPM']];
  return `<style>${RESET}
:host{display:block;width:207px;margin:55px 2px 0 0;padding:7px 8px 5px 0;background:#000;text-align:right;font:700 17px/23px "Open Sans",sans-serif;white-space:nowrap}
p{margin:0}.y{color:#ff6}.g{color:#1de21d}.r{color:#e80c0c}.w{color:#fff}.o{color:#f0884e}.c{color:#1fefef}.s{font-size:16px;line-height:21px}
</style>${L.map(([c,t]) => `<p class="${c}">${t}</p>`).join('')}`;
});
</script>
</body>
</html>
